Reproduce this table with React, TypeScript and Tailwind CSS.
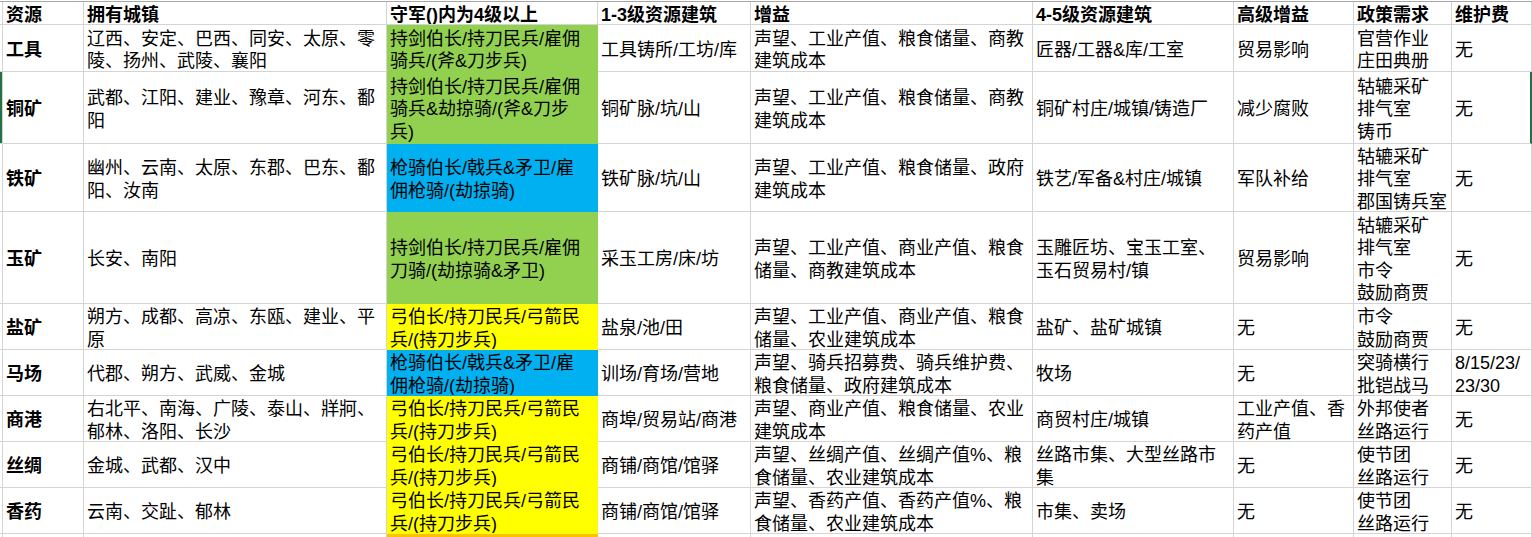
import clsx from "clsx";

type Row = {
  name: string;
  h: string;
  cities: string[];
  guard: string[];
  fill: string;
  b13: string[];
  gain: string[];
  b45: string[];
  adv: string[];
  policy: string[];
  fee: string[];
  selected?: boolean;
};

const GREEN = "bg-[#92d050] border-[#92d050]";
const BLUE = "bg-[#00b0f0] border-[#00b0f0]";
const YELLOW = "bg-[#ffff00] border-[#ffff00]";

const archers = ["弓伯长/持刀民兵/弓箭民", "兵/(持刀步兵)"];
const lancers = ["枪骑伯长/戟兵&矛卫/雇", "佣枪骑/(劫掠骑)"];

const rows: Row[] = [
  {
    name: "工具", h: "h-[47px]",
    cities: ["辽西、安定、巴西、同安、太原、零", "陵、扬州、武陵、襄阳"],
    guard: ["持剑伯长/持刀民兵/雇佣", "骑兵/(斧&刀步兵)"], fill: GREEN,
    b13: ["工具铸所/工坊/库"],
    gain: ["声望、工业产值、粮食储量、商教", "建筑成本"],
    b45: ["匠器/工器&库/工室"], adv: ["贸易影响"],
    policy: ["官营作业", "庄田典册"], fee: ["无"],
  },
  {
    name: "铜矿", h: "h-[72px]", selected: true,
    cities: ["武都、江阳、建业、豫章、河东、鄱", "阳"],
    guard: ["持剑伯长/持刀民兵/雇佣", "骑兵&劫掠骑/(斧&刀步", "兵)"], fill: GREEN,
    b13: ["铜矿脉/坑/山"],
    gain: ["声望、工业产值、粮食储量、商教", "建筑成本"],
    b45: ["铜矿村庄/城镇/铸造厂"], adv: ["减少腐败"],
    policy: ["轱辘采矿", "排气室", "铸币"], fee: ["无"],
  },
  {
    name: "铁矿", h: "h-[68px]",
    cities: ["幽州、云南、太原、东郡、巴东、鄱", "阳、汝南"],
    guard: lancers, fill: BLUE,
    b13: ["铁矿脉/坑/山"],
    gain: ["声望、工业产值、粮食储量、政府", "建筑成本"],
    b45: ["铁艺/军备&村庄/城镇"], adv: ["军队补给"],
    policy: ["轱辘采矿", "排气室", "郡国铸兵室"], fee: ["无"],
  },
  {
    name: "玉矿", h: "h-[92px]",
    cities: ["长安、南阳"],
    guard: ["持剑伯长/持刀民兵/雇佣", "刀骑/(劫掠骑&矛卫)"], fill: GREEN,
    b13: ["采玉工房/床/坊"],
    gain: ["声望、工业产值、商业产值、粮食", "储量、商教建筑成本"],
    b45: ["玉雕匠坊、宝玉工室、", "玉石贸易村/镇"], adv: ["贸易影响"],
    policy: ["轱辘采矿", "排气室", "市令", "鼓励商贾"], fee: ["无"],
  },
  {
    name: "盐矿", h: "h-[46px]",
    cities: ["朔方、成都、高凉、东瓯、建业、平", "原"],
    guard: archers, fill: YELLOW,
    b13: ["盐泉/池/田"],
    gain: ["声望、工业产值、商业产值、粮食", "储量、农业建筑成本"],
    b45: ["盐矿、盐矿城镇"], adv: ["无"],
    policy: ["市令", "鼓励商贾"], fee: ["无"],
  },
  {
    name: "马场", h: "h-[46px]",
    cities: ["代郡、朔方、武威、金城"],
    guard: lancers, fill: BLUE,
    b13: ["训场/育场/营地"],
    gain: ["声望、骑兵招募费、骑兵维护费、", "粮食储量、政府建筑成本"],
    b45: ["牧场"], adv: ["无"],
    policy: ["突骑横行", "批铠战马"], fee: ["8/15/23/", "23/30"],
  },
  {
    name: "商港", h: "h-[46px]",
    cities: ["右北平、南海、广陵、泰山、牂牁、", "郁林、洛阳、长沙"],
    guard: archers, fill: YELLOW,
    b13: ["商埠/贸易站/商港"],
    gain: ["声望、商业产值、粮食储量、农业", "建筑成本"],
    b45: ["商贸村庄/城镇"], adv: ["工业产值、香", "药产值"],
    policy: ["外邦使者", "丝路运行"], fee: ["无"],
  },
  {
    name: "丝绸", h: "h-[46px]",
    cities: ["金城、武都、汉中"],
    guard: archers, fill: YELLOW,
    b13: ["商铺/商馆/馆驿"],
    gain: ["声望、丝绸产值、丝绸产值%、粮", "食储量、农业建筑成本"],
    b45: ["丝路市集、大型丝路市", "集"], adv: ["无"],
    policy: ["使节团", "丝路运行"], fee: ["无"],
  },
  {
    name: "香药", h: "h-[46px]",
    cities: ["云南、交趾、郁林"],
    guard: archers, fill: YELLOW,
    b13: ["商铺/商馆/馆驿"],
    gain: ["声望、香药产值、香药产值%、粮", "食储量、农业建筑成本"],
    b45: ["市集、卖场"], adv: ["无"],
    policy: ["使节团", "丝路运行"], fee: ["无"],
  },
];

const COLS = "grid grid-cols-[3px_81px_303px_211px_153px_282px_201px_120px_98px_80px]";

function Cell({ lines, className }: { lines: string[]; className?: string }) {
  return (
    <div
      className={clsx(
        "flex flex-col justify-center overflow-hidden whitespace-nowrap border-r border-b pl-[3px] pt-[4px] leading-[22.5px]",
        className ?? "border-[#d4d4d4]"
      )}
    >
      {lines.map((l, i) => (
        <div key={i}>{l}</div>
      ))}
    </div>
  );
}

export default function App() {
  const headers = ["资源", "拥有城镇", "守军()内为4级以上", "1-3级资源建筑", "增益", "4-5级资源建筑", "高级增益", "政策需求", "维护费"];

  return (
    <div className="h-[537px] w-[1532px] overflow-hidden bg-white font-['Liberation_Sans','Noto_Sans_CJK_SC',sans-serif] text-[18px] text-black">
      <div className="mt-px border-t border-[#a6a6a6]">
        {/* ── Header ─────────────────────────────────────────── */}
        <div className={clsx(COLS, "h-[23px] font-bold")}>
          <div className="border-r border-b border-[#d4d4d4]" />
          {headers.map((h) => (
            <Cell key={h} lines={[h]} />
          ))}
        </div>

        {/* ── Data rows ──────────────────────────────────────── */}
        {rows.map((r) => (
          <div key={r.name} className={clsx(COLS, r.h)}>
            <div
              className={clsx(
                "border-r border-b border-[#d4d4d4]",
                r.selected && "bg-[#217346]"
              )}
            />
            <Cell lines={[r.name]} className="border-[#d4d4d4] font-bold" />
            <Cell lines={r.cities} />
            <Cell lines={r.guard} className={r.fill} />
            <Cell lines={r.b13} />
            <Cell lines={r.gain} />
            <Cell lines={r.b45} />
            <Cell lines={r.adv} />
            <Cell lines={r.policy} />
            <Cell
              lines={r.fee}
              className={r.selected ? "border-[#d4d4d4] border-r-2 border-r-[#217346]" : undefined}
            />
          </div>
        ))}

        {/* ── Next row, cut off ──────────────────────────────── */}
        <div className={clsx(COLS, "h-[20px]")}>
          <div className="border-r border-[#d4d4d4]" />
          <div className="border-r border-[#d4d4d4]" />
          <div className="border-r border-[#d4d4d4]" />
          <div className="bg-[#ffc000]" />
          <div className="border-r border-[#d4d4d4]" />
          <div className="border-r border-[#d4d4d4]" />
          <div className="border-r border-[#d4d4d4]" />
          <div className="border-r border-[#d4d4d4]" />
          <div className="border-r border-[#d4d4d4]" />
          <div className="border-r border-[#d4d4d4]" />
        </div>
      </div>
    </div>
  );
}
